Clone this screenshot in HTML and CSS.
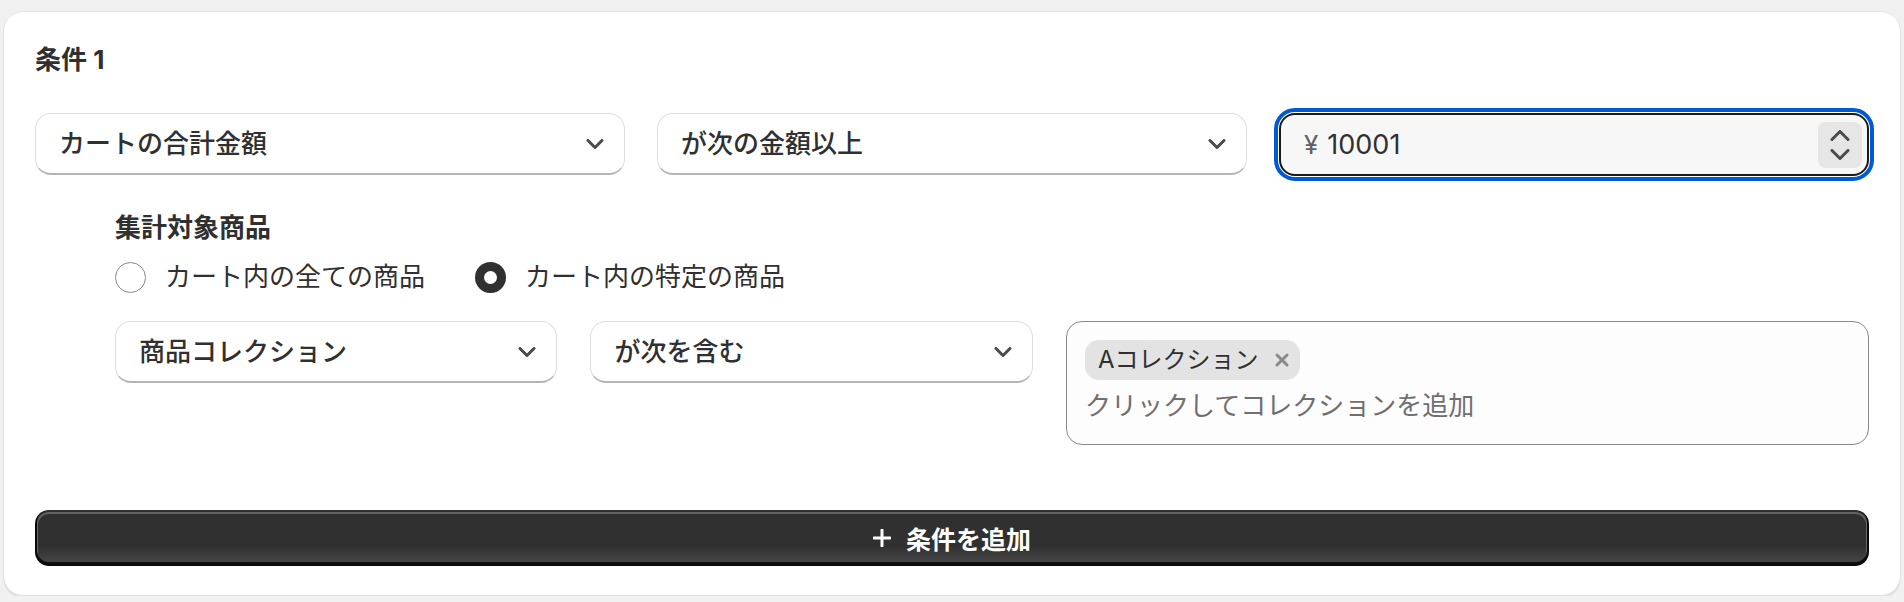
FILE: index.html
```html
<!DOCTYPE html>
<html lang="ja">
<head>
<meta charset="utf-8">
<title>条件</title>
<link rel="stylesheet" href="styles.css">
</head>
<body>
<div class="card">
  <h2 class="title">条件 1</h2>

  <div class="row-main">
    <div class="select">
      <span class="select-text">カートの合計金額</span>
      <svg class="chev" width="18" height="10" viewBox="0 0 18 10"><polyline points="2,1.5 9,8.5 16,1.5" /></svg>
    </div>
    <div class="select">
      <span class="select-text">が次の金額以上</span>
      <svg class="chev" width="18" height="10" viewBox="0 0 18 10"><polyline points="2,1.5 9,8.5 16,1.5" /></svg>
    </div>
    <div class="field">
      <span class="prefix">¥</span>
      <span class="value">10001</span>
      <div class="stepper">
        <svg class="step" width="20" height="11" viewBox="0 0 20 11"><polyline points="2,9.5 10,1.5 18,9.5" /></svg>
        <svg class="step" width="20" height="11" viewBox="0 0 20 11"><polyline points="2,1.5 10,9.5 18,1.5" /></svg>
      </div>
    </div>
  </div>

  <div class="sub">
    <div class="sub-title">集計対象商品</div>
    <div class="radios">
      <div class="radio"><span class="dot"></span><span class="radio-label">カート内の全ての商品</span></div>
      <div class="radio checked"><span class="dot"></span><span class="radio-label">カート内の特定の商品</span></div>
    </div>
    <div class="row-sub">
      <div class="select">
        <span class="select-text">商品コレクション</span>
        <svg class="chev" width="18" height="10" viewBox="0 0 18 10"><polyline points="2,1.5 9,8.5 16,1.5" /></svg>
      </div>
      <div class="select">
        <span class="select-text">が次を含む</span>
        <svg class="chev" width="18" height="10" viewBox="0 0 18 10"><polyline points="2,1.5 9,8.5 16,1.5" /></svg>
      </div>
      <div class="tagbox">
        <span class="chip">
          <span class="chip-text">Aコレクション</span>
          <svg class="chip-x" width="14" height="14" viewBox="0 0 14 14"><line x1="2" y1="2" x2="12" y2="12" /><line x1="12" y1="2" x2="2" y2="12" /></svg>
        </span>
        <span class="placeholder">クリックしてコレクションを追加</span>
      </div>
    </div>
  </div>

  <button class="add" type="button">
    <svg class="plus" width="18" height="18" viewBox="0 0 18 18"><line x1="9" y1="1" x2="9" y2="17" /><line x1="1" y1="9" x2="17" y2="9" /></svg>
    <span>条件を追加</span>
  </button>
</div>
</body>
</html>
```

FILE: styles.css
```css
* {
  box-sizing: border-box;
}

html, body {
  margin: 0;
  background: #f1f1f1;
}

body {
  padding: 11px 3px 0 3px;
  font-family: Inter, "Noto Sans CJK JP", sans-serif;
  color: #303030;
  font-size: 26px;
}

.card {
  background: #ffffff;
  border: 1px solid #e3e3e3;
  border-radius: 20px;
  padding: 30px 31px 29px 31px;
  box-shadow: 0 2px 1px rgba(0, 0, 0, 0.08);
}

.title {
  margin: 0;
  font-size: 26px;
  font-weight: 700;
  line-height: 36px;
}

.row-main {
  margin-top: 35px;
  display: grid;
  grid-template-columns: 1fr 1fr 1fr;
  gap: 32px;
}

.select {
  height: 62px;
  display: flex;
  align-items: center;
  justify-content: space-between;
  padding: 0 20px 0 23px;
  background: #ffffff;
  border: 1px solid #dedede;
  border-bottom: 2px solid #b5b5b5;
  border-radius: 16px;
}

.select-text {
  font-size: 26px;
  font-weight: 500;
  line-height: 36px;
  white-space: nowrap;
}

.chev polyline,
.step polyline {
  fill: none;
  stroke: #4a4a4a;
  stroke-width: 3;
  stroke-linecap: round;
  stroke-linejoin: round;
}

.field {
  height: 63px;
  display: flex;
  align-items: center;
  padding: 0 5px 0 23px;
  background: #f7f7f7;
  border: 2px solid #1a1a1a;
  border-radius: 16px;
  outline: 4px solid #005bd3;
  outline-offset: 1px;
}

.prefix {
  color: #616161;
  font-size: 26px;
  line-height: 36px;
  margin-right: 9px;
}

.value {
  font-size: 27px;
  line-height: 36px;
  color: #303030;
}

.stepper {
  margin-left: auto;
  width: 44px;
  height: 46px;
  border-radius: 8px;
  background: #e6e6e6;
  display: flex;
  flex-direction: column;
  align-items: center;
  justify-content: center;
  gap: 8px;
}

.step {
  display: block;
}

.sub {
  margin-left: 80px;
}

.sub-title {
  margin-top: 34px;
  font-size: 26px;
  font-weight: 700;
  line-height: 36px;
}

.radios {
  margin-top: 13px;
  display: flex;
  align-items: center;
  gap: 50px;
  height: 36px;
}

.radio {
  display: flex;
  align-items: center;
  gap: 19px;
}

.dot {
  width: 31px;
  height: 31px;
  border-radius: 50%;
  border: 1.5px solid #8a8a8a;
  background: #ffffff;
  position: relative;
  flex: none;
}

.radio.checked .dot {
  border: none;
  background: #303030;
}

.radio.checked .dot::after {
  content: "";
  position: absolute;
  left: 50%;
  top: 50%;
  width: 13px;
  height: 13px;
  margin: -6.5px 0 0 -6.5px;
  border-radius: 50%;
  background: #ffffff;
}

.radio-label {
  font-size: 26px;
  line-height: 36px;
  font-weight: 400;
}

.row-sub {
  margin-top: 26px;
  display: grid;
  grid-template-columns: 1fr 1fr 1.815fr;
  gap: 33px;
  align-items: start;
}

.tagbox {
  display: flex;
  flex-direction: column;
  align-items: flex-start;
  gap: 6px;
  padding: 18px;
  background: #fdfdfd;
  border: 1px solid #8a8a8a;
  border-radius: 16px;
}

.chip {
  height: 40px;
  display: inline-flex;
  align-items: center;
  gap: 17px;
  padding: 0 11px 0 13px;
  background: #e3e3e3;
  border-radius: 14px;
}

.chip-text {
  font-size: 24px;
  line-height: 32px;
  font-weight: 400;
  color: #303030;
}

.chip-x line {
  stroke: #8a8a8a;
  stroke-width: 3;
  stroke-linecap: round;
}

.placeholder {
  font-size: 26px;
  line-height: 40px;
  color: #6f6f6f;
}

.add {
  margin-top: 65px;
  width: 100%;
  height: 56px;
  display: flex;
  align-items: center;
  justify-content: center;
  gap: 15px;
  border: none;
  border-radius: 14px;
  color: #ffffff;
  font-family: Inter, "Noto Sans CJK JP", sans-serif;
  font-size: 25px;
  font-weight: 600;
  background: linear-gradient(180deg, rgba(255, 255, 255, 0) 63%, rgba(255, 255, 255, 0.13)), #303030;
  box-shadow: inset 0 -2px 0 2px rgba(0, 0, 0, 0.8), inset 0 0 0 2px #303030, inset 0 1px 0 3px rgba(255, 255, 255, 0.25);
  padding: 0;
}

.plus line {
  stroke: #ffffff;
  stroke-width: 3;
  stroke-linecap: round;
}
```
